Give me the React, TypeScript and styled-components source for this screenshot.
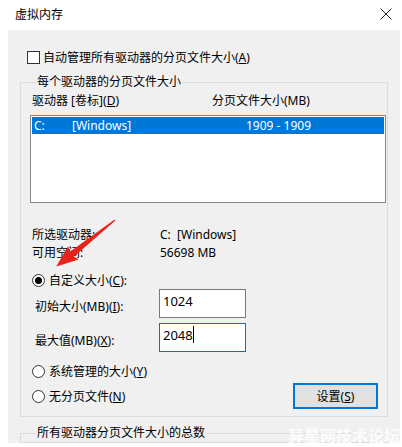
import { FC, ReactNode } from "react";
import styled, { createGlobalStyle } from "styled-components";

const GlobalStyle = createGlobalStyle`
  html, body {
    margin: 0;
    padding: 0;
    background: #ffffff;
  }
  body {
    font-family: "Noto Sans", "Noto Sans CJK SC", sans-serif;
    font-size: 12px;
    color: #000;
  }
`;

const Window = styled.div`
  position: relative;
  width: 402px;
  height: 447px;
  display: flex;
  flex-direction: column;
  overflow: hidden;
  background: #fff;
`;

const TitleBar = styled.div`
  height: 30px;
  display: flex;
  align-items: center;
  justify-content: space-between;
  padding: 0 10px 0 15px;
  box-sizing: border-box;
  font-size: 12px;
  line-height: 16px;
`;

const CloseIcon = styled.svg`
  width: 12px;
  height: 12px;
  margin-top: -2px;
`;

const Panel = styled.div`
  margin-left: 8px;
  width: 392px;
  height: 413px;
  background: #f0f0f0;
  box-sizing: border-box;
  padding: 21px 12px 0 12px;
  overflow: hidden;
  display: flex;
  flex-direction: column;
`;

const CheckRow = styled.label`
  display: flex;
  align-items: center;
  gap: 3px;
  padding-left: 7px;
  height: 13px;
  line-height: 13px;
`;

const CheckBox = styled.span`
  width: 13px;
  height: 13px;
  box-sizing: border-box;
  border: 1px solid #333;
  background: #fff;
`;

const Group = styled.fieldset`
  margin: 10px 0 0 0;
  padding: 0 1px 7px 9px;
  border: 1px solid #dcdcdc;
  min-width: 0;
  display: flex;
  flex-direction: column;
`;

const Legend = styled.legend`
  padding: 0 1px;
  margin-left: 6px;
  line-height: 16px;
  height: 16px;
`;

const Header = styled.div`
  display: flex;
  padding-left: 2px;
  margin-top: 2px;
  line-height: 18px;
  height: 18px;
`;

const HeaderCell = styled.span<{ $w?: number }>`
  width: ${(p) => (p.$w ? `${p.$w}px` : "auto")};
`;

const ListBox = styled.div`
  margin-top: 5px;
  height: 88px;
  border: 1px solid #828790;
  background: #fff;
  box-sizing: border-box;
  padding: 1px;
`;

const ListRow = styled.div<{ $selected?: boolean }>`
  height: 17px;
  line-height: 17px;
  display: flex;
  background: ${(p) => (p.$selected ? "#0078d7" : "transparent")};
  color: ${(p) => (p.$selected ? "#fff" : "#000")};
  padding-left: 2px;
`;

const Cell = styled.span<{ $w?: number }>`
  width: ${(p) => (p.$w ? `${p.$w}px` : "auto")};
  white-space: pre;
`;

const InfoGrid = styled.div`
  margin-top: 23px;
  display: grid;
  grid-template-columns: 128px 1fr;
  padding-left: 2px;
  line-height: 18px;
  white-space: pre;
`;

const RadioRow = styled.label<{ $mt: number }>`
  display: flex;
  align-items: center;
  gap: 4px;
  padding-left: 2px;
  height: 18px;
  margin-top: ${(p) => p.$mt}px;
`;

const RadioCircle = styled.span<{ $checked?: boolean }>`
  width: 13px;
  height: 13px;
  box-sizing: border-box;
  border: 1px solid #333;
  border-radius: 50%;
  background: #fff;
  display: flex;
  align-items: center;
  justify-content: center;
  &::after {
    content: "";
    width: 7px;
    height: 7px;
    border-radius: 50%;
    background: ${(p) => (p.$checked ? "#000" : "transparent")};
  }
`;

const FieldRow = styled.div<{ $mt: number }>`
  display: flex;
  align-items: center;
  padding-left: 5px;
  margin-top: ${(p) => p.$mt}px;
`;

const FieldLabel = styled.span`
  width: 124px;
  padding-top: 4px;
`;

const TextBox = styled.div<{ $focused?: boolean }>`
  width: 87px;
  height: 29px;
  box-sizing: border-box;
  border: 1px solid ${(p) => (p.$focused ? "#1772a0" : "#7a7a7a")};
  background: #fff;
  padding: 2px 3px;
  font-size: 13px;
  line-height: 18px;
  display: flex;
  align-items: flex-start;
`;

const Caret = styled.span`
  width: 1px;
  height: 17px;
  background: #000;
`;

const BottomRow = styled.div`
  display: flex;
  align-items: center;
  justify-content: space-between;
  margin-top: 3px;
  padding-right: 8px;
`;

const Button = styled.button`
  width: 85px;
  height: 26px;
  border: 2px solid #0078d7;
  background: #e1e1e1;
  font-family: inherit;
  font-size: 12px;
  color: #000;
  padding: 0;
`;

const TotalGroup = styled.fieldset`
  margin: 8px 0 0 0;
  padding: 0 1px 0 9px;
  border: 1px solid #dcdcdc;
  min-width: 0;
  height: 60px;
`;

const Watermark = styled.div`
  position: absolute;
  right: 2px;
  top: 423px;
  font-size: 16px;
  font-weight: bold;
  color: rgba(255, 255, 255, 0.85);
  font-family: "Noto Sans CJK SC", sans-serif;
`;

const Arrow = styled.svg`
  position: absolute;
  left: 0;
  top: 0;
  pointer-events: none;
`;

const Radio: FC<{ checked?: boolean; mt: number; children: ReactNode }> = ({
  checked,
  mt,
  children,
}) => (
  <RadioRow $mt={mt}>
    <RadioCircle $checked={checked} />
    <span>{children}</span>
  </RadioRow>
);

export default function App() {
  return (
    <>
      <GlobalStyle />
      <Window>
        <TitleBar>
          <span>虚拟内存</span>
          <CloseIcon viewBox="0 0 12 12">
            <path d="M0.5 0.5 L11.5 11.5 M11.5 0.5 L0.5 11.5" stroke="#222" strokeWidth="1" />
          </CloseIcon>
        </TitleBar>
        <Panel>
          <CheckRow>
            <CheckBox />
            <span>
              自动管理所有驱动器的分页文件大小(<u>A</u>)
            </span>
          </CheckRow>
          <Group>
            <Legend>每个驱动器的分页文件大小</Legend>
            <Header>
              <HeaderCell $w={180}>
                驱动器 [卷标](<u>D</u>)
              </HeaderCell>
              <HeaderCell>分页文件大小(MB)</HeaderCell>
            </Header>
            <ListBox>
              <ListRow $selected>
                <Cell $w={38}>C:</Cell>
                <Cell $w={174}>[Windows]</Cell>
                <Cell>1909 - 1909</Cell>
              </ListRow>
            </ListBox>
            <InfoGrid>
              <span>所选驱动器:</span>
              <span>{"C:  [Windows]"}</span>
              <span>可用空间:</span>
              <span>56698 MB</span>
            </InfoGrid>
            <Radio checked mt={9}>
              自定义大小(<u>C</u>):
            </Radio>
            <FieldRow $mt={0}>
              <FieldLabel>
                初始大小(MB)(<u>I</u>):
              </FieldLabel>
              <TextBox>1024</TextBox>
            </FieldRow>
            <FieldRow $mt={5}>
              <FieldLabel>
                最大值(MB)(<u>X</u>):
              </FieldLabel>
              <TextBox $focused>
                2048
                <Caret />
              </TextBox>
            </FieldRow>
            <Radio mt={10}>
              系统管理的大小(<u>Y</u>)
            </Radio>
            <BottomRow>
              <Radio mt={0}>
                无分页文件(<u>N</u>)
              </Radio>
              <Button>
                设置(<u>S</u>)
              </Button>
            </BottomRow>
          </Group>
          <TotalGroup>
            <Legend>所有驱动器分页文件大小的总数</Legend>
          </TotalGroup>
        </Panel>
        <Watermark>异星网技术论坛</Watermark>
        <Arrow width="402" height="447" viewBox="0 0 402 447">
          <g transform="translate(115 220) rotate(141.6)">
            <polygon
              points="0,-0.6 55,-3.2 53,-8.5 75,0 53,8.5 55,3.2 0,0.6"
              fill="#e8231c"
            />
          </g>
        </Arrow>
      </Window>
    </>
  );
}
